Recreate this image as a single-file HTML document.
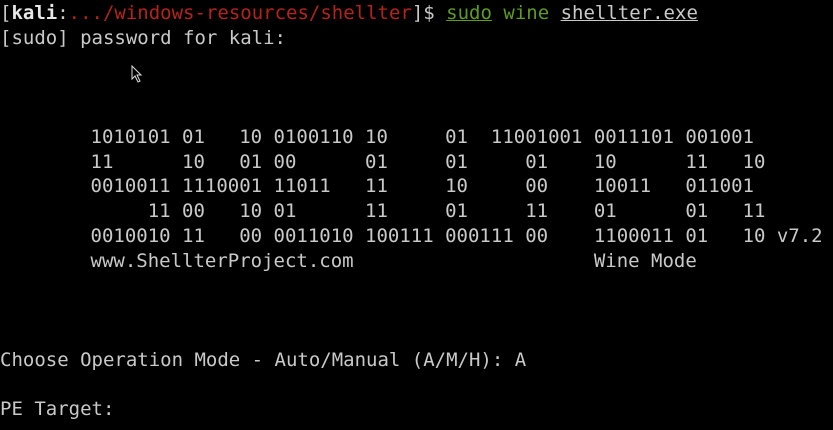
<!DOCTYPE html>
<html><head><style>
html,body{margin:0;padding:0;background:#000;width:833px;height:430px;overflow:hidden}
pre{margin:0;padding:1px 0 0 0;font-family:"DejaVu Sans Mono","Liberation Mono",monospace;font-size:19px;line-height:24.75px;color:#c9c9c9;white-space:pre}
.b{font-weight:bold;color:#e8e8e8}.r{color:#b5231b}.g{color:#5c9c20}.u{text-decoration:underline}
.ban{position:relative;left:-1px}
</style></head><body><pre>[<span class="b">kali</span>:<span class="r">.../windows-resources/shellter</span>]$ <span class="g u">sudo</span> <span class="g">wine</span> <span class="u">shellter.exe</span>
[sudo] password for kali:



<span class="ban">        1010101 01   10 0100110 10     01  11001001 0011101 001001</span>
<span class="ban">        11      10   01 00      01     01     01    10      11   10</span>
<span class="ban">        0010011 1110001 11011   11     10     00    10011   011001</span>
<span class="ban">             11 00   10 01      11     01     11    01      01   11</span>
<span class="ban">        0010010 11   00 0011010 100111 000111 00    1100011 01   10 v7.2</span>
<span class="ban">        www.ShellterProject.com                     Wine Mode</span>



Choose Operation Mode - Auto/Manual (A/M/H): A

PE Target:</pre>
<svg style="position:absolute;left:131px;top:65px" width="12" height="18" viewBox="0 0 12 18"><path d="M1 1 L1 14 L4 11 L7 17 L9 16 L6 10 L10 10 Z" fill="#000" stroke="#ddd" stroke-width="1"/></svg>
</body></html>
